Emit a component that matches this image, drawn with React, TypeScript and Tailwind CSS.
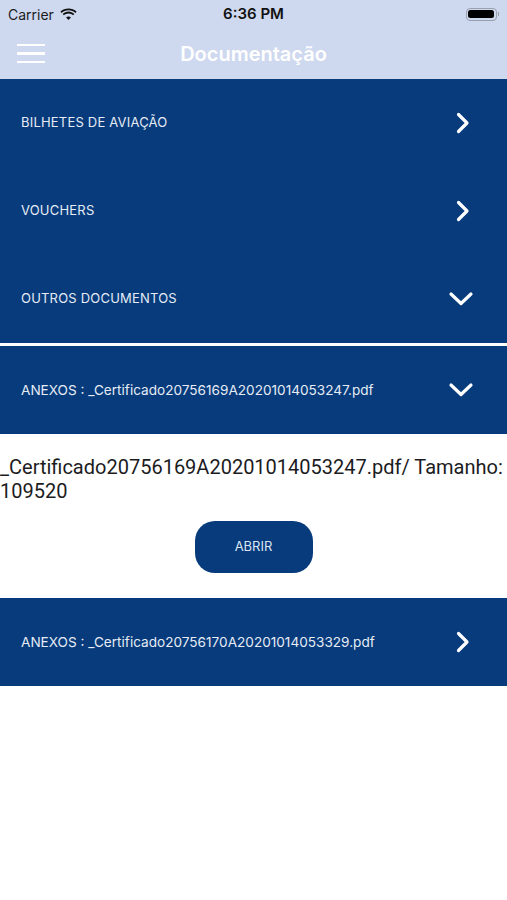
import React from "react";

const font = { fontFamily: "Inter, 'Liberation Sans', sans-serif" };

const ChevronRight = () => (
  <svg width="24" height="24" viewBox="0 0 24 24" fill="none">
    <path d="M8.5 3.5 L17 12 L8.5 20.5" stroke="white" strokeWidth="3.2" strokeLinecap="round" strokeLinejoin="round" />
  </svg>
);

const ChevronDown = () => (
  <svg width="26" height="18" viewBox="0 0 26 18" fill="none">
    <path d="M3 4 L13 13.5 L23 4" stroke="white" strokeWidth="3.2" strokeLinecap="round" strokeLinejoin="round" />
  </svg>
);

const Row = ({ text, open, small }: { text: string; open?: boolean; small?: boolean }) => (
  <div className="h-[88px] flex items-center justify-between pl-[21px] pr-[33px] bg-[#073b7b]">
    <span className={`text-[#e6ecf6] ${small ? "text-[13.6px]" : "text-[13px] tracking-[0.2px]"}`}>{text}</span>
    {open ? <ChevronDown /> : <ChevronRight />}
  </div>
);

export default function App() {
  return (
    <div className="w-[507px] h-[900px] bg-white flex flex-col" style={font}>
      <div className="bg-[#ced8ee] h-[79px] flex flex-col">
        <div className="h-[28px] relative flex items-center px-[8px]">
          <span className="text-[14px] text-[#1c1c1e]">Carrier</span>
          <svg className="ml-[6px]" width="17" height="12" viewBox="0 0 17 12">
            <path d="M8.5 2.2 C11.2 2.2 13.6 3.2 15.4 4.9 L16.6 3.6 C14.5 1.6 11.6 0.4 8.5 0.4 C5.4 0.4 2.5 1.6 0.4 3.6 L1.6 4.9 C3.4 3.2 5.8 2.2 8.5 2.2 Z" fill="#111" />
            <path d="M8.5 5.4 C10.3 5.4 11.9 6.1 13.1 7.2 L14.3 6 C12.8 4.5 10.7 3.6 8.5 3.6 C6.3 3.6 4.2 4.5 2.7 6 L3.9 7.2 C5.1 6.1 6.7 5.4 8.5 5.4 Z" fill="#111" />
            <path d="M8.5 8.5 C9.5 8.5 10.3 8.9 10.9 9.5 L8.5 11.9 L6.1 9.5 C6.7 8.9 7.5 8.5 8.5 8.5 Z" fill="#111" />
          </svg>
          <span className="absolute left-0 right-0 text-center text-[15px] font-semibold text-[#111]">6:36 PM</span>
          <div className="ml-auto flex items-center">
            <div className="w-[31px] h-[13px] rounded-[4px] border border-[#9aa0ad] p-[1.5px]">
              <div className="w-full h-full rounded-[2.5px] bg-black" />
            </div>
            <div className="w-[1.5px] h-[4px] bg-[#9aa0ad] ml-[1px]" />
          </div>
        </div>
        <div className="flex-1 relative flex items-center">
          <div className="ml-[17px] flex flex-col gap-[6px]">
            <div className="w-[28px] h-[2.5px] bg-white" />
            <div className="w-[28px] h-[2.5px] bg-white" />
            <div className="w-[28px] h-[2.5px] bg-white" />
          </div>
          <span className="absolute left-0 right-0 text-center text-[20px] font-semibold text-white">Documentação</span>
        </div>
      </div>
      <Row text="BILHETES DE AVIAÇÃO" />
      <Row text="VOUCHERS" />
      <Row text="OUTROS DOCUMENTOS" open />
      <div className="h-[3px] bg-white" />
      <Row text="ANEXOS : _Certificado20756169A20201014053247.pdf" open small />
      <div className="pt-[21px] pb-[25px] flex flex-col">
        <p className="font-['Roboto',sans-serif] text-[20px] leading-[24px] text-[#1c1c1e]">
          _Certificado20756169A20201014053247.pdf/ Tamanho: 109520
        </p>
        <button className="mt-[18px] self-center w-[118px] h-[52px] rounded-[20px] bg-[#073b7b] text-[13px] text-[#dbe4f3]">
          ABRIR
        </button>
      </div>
      <Row text="ANEXOS : _Certificado20756170A20201014053329.pdf" small />
    </div>
  );
}
